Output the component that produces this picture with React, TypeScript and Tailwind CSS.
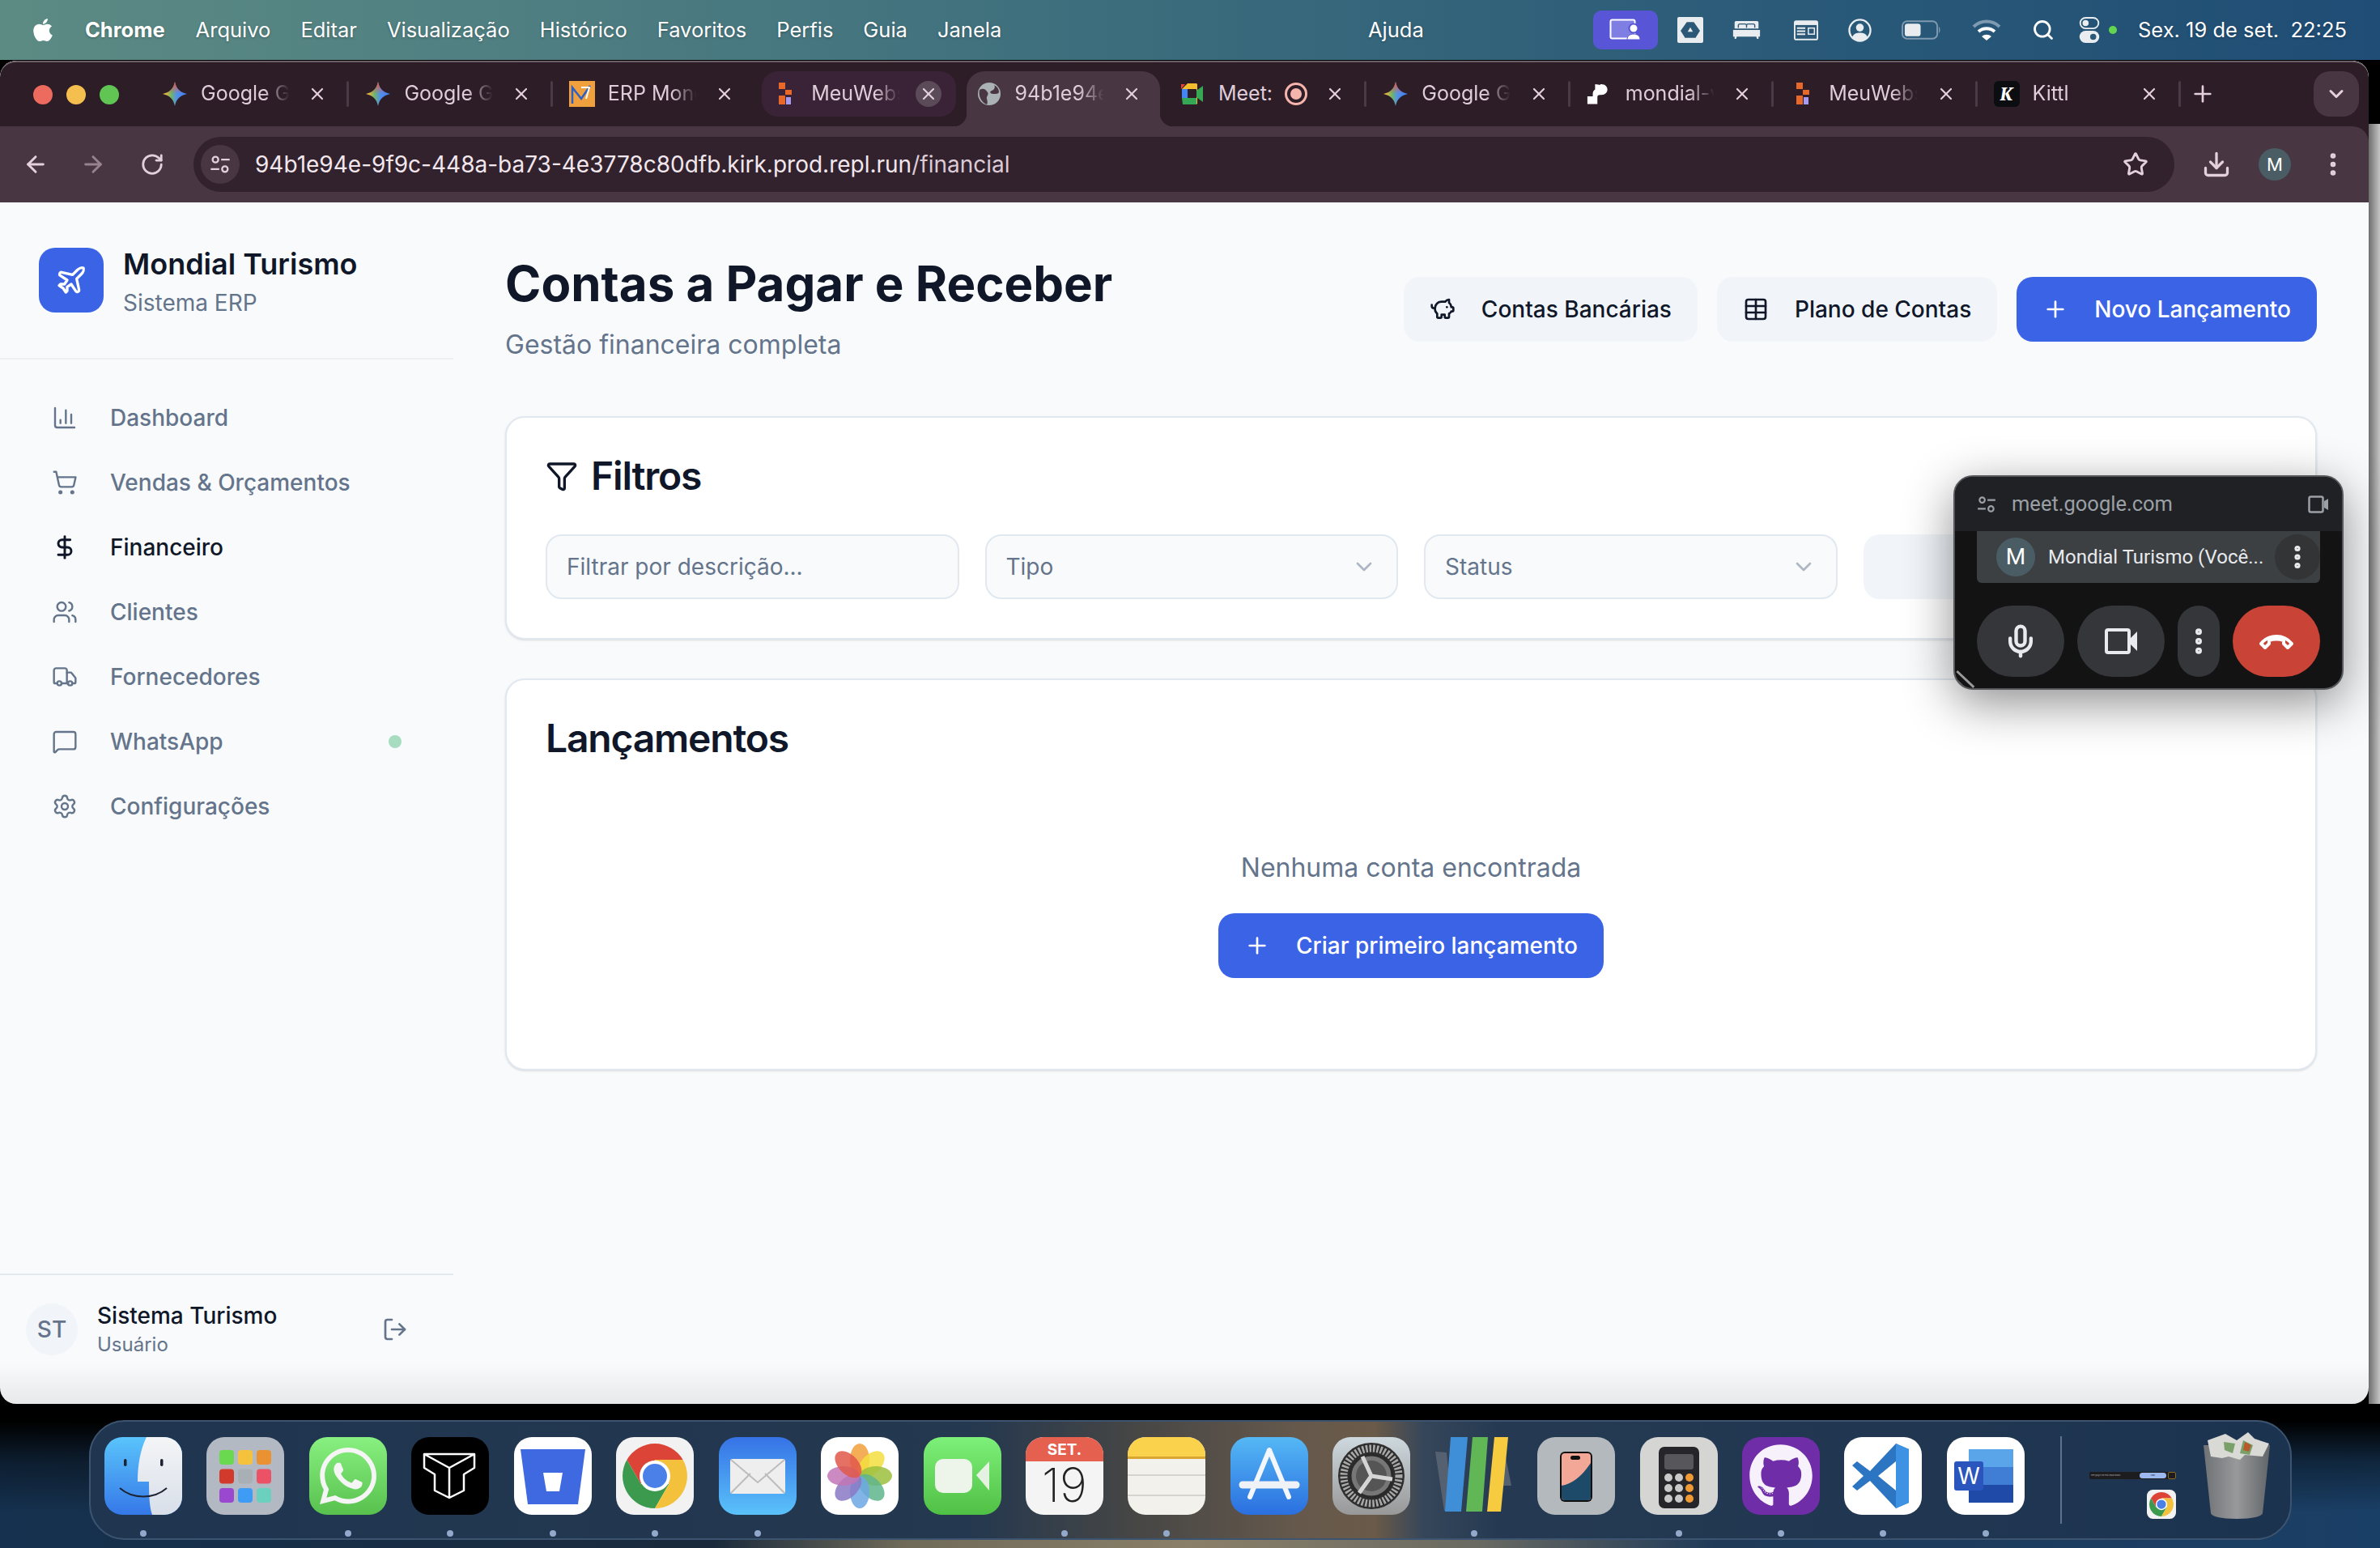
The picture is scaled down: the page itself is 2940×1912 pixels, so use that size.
import {
  ArrowLeft,
  ArrowRight,
  ChartColumn,
  ChevronDown,
  Download,
  DollarSign,
  EllipsisVertical,
  Filter,
  LogOut,
  MessageSquare,
  Mic,
  PiggyBank,
  Plane,
  Plus,
  RotateCw,
  Search,
  Settings,
  ShoppingCart,
  Star,
  Table,
  Truck,
  Users,
  X,
} from 'lucide-react';
import { FaApple, FaGithub, FaWhatsapp } from 'react-icons/fa';
import type { ReactNode } from 'react';

const menus = ['Arquivo', 'Editar', 'Visualização', 'Histórico', 'Favoritos', 'Perfis', 'Guia', 'Janela'];

function Tune({ className }: { className?: string }) {
  return (
    <svg viewBox="0 0 24 24" fill="none" stroke="currentColor" strokeWidth="2" className={className}>
      <circle cx="7" cy="7" r="3" />
      <path d="M13 7h9M2 17h9" />
      <circle cx="17" cy="17" r="3" />
    </svg>
  );
}

function MenuBar() {
  return (
    <header className="flex h-[74px] shrink-0 items-center bg-[linear-gradient(90deg,#5c8b84_0%,#4d7d81_25%,#3a6b7c_50%,#2a5a78_75%,#1f4d75_100%)] pl-[39px] text-[25.5px] text-white [text-shadow:0_1px_3px_rgba(0,0,0,.3)]">
      <div className="flex w-[1651px] items-center">
        <FaApple className="h-[32px] w-[28px]" />
        <span className="ml-[38px] font-bold">Chrome</span>
        <div className="ml-[38px] flex gap-[37px]">
          {menus.map((m) => (
            <span key={m}>{m}</span>
          ))}
        </div>
      </div>
      <span className="w-[278px]">Ajuda</span>

      <div className="flex h-[48px] w-[80px] items-center justify-center rounded-[10px] bg-[#5856d6]">
        <svg viewBox="0 0 40 28" className="h-[28px] w-[40px]">
          <rect x="1.5" y="1.5" width="30" height="23" rx="2" fill="#7f7ee2" stroke="#fff" strokeWidth="2" />
          <circle cx="30" cy="12" r="5.5" fill="#fff" stroke="#5856d6" strokeWidth="2" />
          <path d="M22 26c0-5 4-7 8-7s8 2 8 7z" fill="#fff" stroke="#5856d6" strokeWidth="1" />
        </svg>
      </div>
      <div className="ml-[24px] flex h-[32px] w-[32px] items-center justify-center rounded-[2px] bg-[#e9edf0]">
        <svg viewBox="0 0 24 24" className="h-[26px] w-[26px]">
          <path d="M8 3h8l7 10-5 8H6l-5-8z" fill="#2b5876" />
          <path d="M12 9l3 5H9z" fill="#e9edf0" />
        </svg>
      </div>
      <svg viewBox="0 0 36 26" fill="#e9edf0" className="ml-[36px] h-[24px] w-[35px]">
        <path d="M4 1h28a2 2 0 0 1 2 2v8H2V3a2 2 0 0 1 2-2zM0 13h36v9H34v3h-2l-1-3H5l-1 3H2v-3H0z" />
        <path d="M7 10V7a2 2 0 0 1 2-2h7a2 2 0 0 1 2 2v3M18 10V7a2 2 0 0 1 2-2h7a2 2 0 0 1 2 2v3" stroke="#2b5876" strokeWidth="1.5" fill="none" />
      </svg>
      <svg viewBox="0 0 32 26" className="ml-[41px] h-[25px] w-[30px]">
        <rect width="32" height="26" rx="3" fill="#e9edf0" />
        <rect x="2" y="6" width="28" height="18" fill="#2b5876" />
        <path d="M4 10h11M4 14h11M4 18h11" stroke="#e9edf0" strokeWidth="2" />
        <rect x="19" y="10" width="8" height="8" fill="none" stroke="#e9edf0" strokeWidth="1.6" />
      </svg>
      <svg viewBox="0 0 30 30" fill="none" className="ml-[37px] h-[29px] w-[29px]">
        <circle cx="15" cy="15" r="13.5" stroke="#e9edf0" strokeWidth="2.4" />
        <circle cx="15" cy="11.5" r="5" fill="#e9edf0" />
        <path d="M5 24c2-5 6-6 10-6s8 1 10 6c-3 3-6 5-10 5s-7-2-10-5z" fill="#e9edf0" />
      </svg>
      <svg viewBox="0 0 50 24" fill="none" className="ml-[37px] h-[24px] w-[49px]">
        <rect x="1" y="1" width="44" height="22" rx="6" stroke="#7f9ab0" strokeWidth="2" />
        <rect x="4" y="4" width="20" height="16" rx="3.5" fill="#e9edf0" />
        <path d="M47 8c2 1 2 7 0 8z" fill="#7f9ab0" />
      </svg>
      <svg viewBox="0 0 38 26" className="ml-[37px] h-[26px] w-[38px]">
        <path d="M3 9a23 23 0 0 1 32 0" fill="none" stroke="#7f9ab0" strokeWidth="4" />
        <path d="M9 15a15 15 0 0 1 20 0" fill="none" stroke="#fff" strokeWidth="4" />
        <path d="M19 26l-6-5a9 9 0 0 1 12 0z" fill="#fff" />
      </svg>
      <Search className="ml-[37px] h-[30px] w-[28px]" strokeWidth={2.4} />
      <svg viewBox="0 0 26 34" className="ml-[30px] h-[32px] w-[26px]">
        <rect x="1" y="1" width="24" height="14" rx="7" fill="none" stroke="#e9edf0" strokeWidth="2" />
        <circle cx="8" cy="8" r="4" fill="#e9edf0" />
        <rect y="18" width="26" height="16" rx="8" fill="#e9edf0" />
        <circle cx="18" cy="26" r="4" fill="#2b5876" />
      </svg>
      <span className="ml-[11px] h-[10px] w-[10px] rounded-full bg-[#63d64f]" />
      <span className="ml-[26px] whitespace-nowrap">Sex. 19 de set.&nbsp; 22:25</span>
    </header>
  );
}

function Gemini() {
  return (
    <svg viewBox="0 0 32 32" className="h-[32px] w-[32px]">
      <defs>
        <linearGradient id="gem" x1="0" y1="0" x2="1" y2="0">
          <stop offset="0.1" stopColor="#eeb93a" />
          <stop offset="0.35" stopColor="#6fb56a" />
          <stop offset="0.6" stopColor="#4f8fee" />
          <stop offset="1" stopColor="#3f7ff0" />
        </linearGradient>
        <linearGradient id="gemTop" x1="0" y1="0" x2="0" y2="1">
          <stop offset="0.05" stopColor="#e0584e" />
          <stop offset="0.5" stopColor="#e0584e" stopOpacity="0" />
        </linearGradient>
      </defs>
      <path d="M16 1c1.500 8 6 13 15 15-9 2-13.500 7-15 15-1.500-8-6-13-15-15 9-2 13.500-7 15-15z" fill="url(#gem)" />
      <path d="M16 1c1.500 8 6 13 15 15-9 2-13.500 7-15 15-1.500-8-6-13-15-15 9-2 13.500-7 15-15z" fill="url(#gemTop)" />
    </svg>
  );
}

function Figma() {
  return (
    <svg viewBox="0 0 32 32" className="h-[32px] w-[32px]">
      <rect x="8" y="2" width="8" height="8" fill="#e8682a" />
      <rect x="16" y="11" width="8" height="6" fill="#e8682a" />
      <rect x="8" y="18" width="8" height="11" fill="#e8682a" />
      <rect x="17" y="20" width="6" height="9" fill="#a79bf0" />
    </svg>
  );
}

type TabProps = {
  icon: ReactNode;
  title: string;
  variant?: 'hover' | 'active';
  separator?: boolean;
  meet?: boolean;
};

function Tab({ icon, title, variant, separator, meet }: TabProps) {
  return (
    <div className="relative flex h-[56px] w-[251.4px] shrink-0 items-center pl-[20px] text-[25px] text-[#dfcdd9]">
      {variant === 'hover' && <div className="absolute inset-y-0 left-[7px] right-[5px] rounded-[20px] bg-[#3b2337]" />}
      {variant === 'active' && (
        <>
          <div className="absolute -bottom-[12px] left-[8px] right-[4px] top-0 rounded-t-[22px] bg-[#483642]" />
          <div className="absolute -bottom-[12px] left-[-8px] h-[16px] w-[16px] bg-[radial-gradient(circle_at_0_0,transparent_16px,#483642_16.5px)]" />
          <div className="absolute -bottom-[12px] right-[-12px] h-[16px] w-[16px] bg-[radial-gradient(circle_at_100%_0,transparent_16px,#483642_16.5px)]" />
        </>
      )}
      <div className="relative flex h-[32px] w-[32px] shrink-0 items-center justify-center">{icon}</div>
      {meet ? (
        <span className="relative ml-[16px] w-[64px] whitespace-nowrap">{title}</span>
      ) : (
        <span className="relative ml-[16px] w-[112px] whitespace-nowrap [mask-image:linear-gradient(90deg,#000_70%,transparent_98%)]">
          {title}
        </span>
      )}
      {meet && (
        <span className="relative ml-[18px] flex h-[28px] w-[28px] items-center justify-center rounded-full border-[3px] border-[#f5b5ac]">
          <span className="h-[14px] w-[14px] rounded-full bg-[#f5b5ac]" />
        </span>
      )}
      <div
        className={`absolute right-[23px] flex h-[32px] w-[32px] items-center justify-center rounded-full ${
          variant === 'hover' ? 'bg-[#5b4a58]' : ''
        }`}
      >
        <X className="h-[24px] w-[24px] text-[#e3d0dc]" strokeWidth={2.2} />
      </div>
      {separator && <div className="absolute right-0 top-[12px] h-[32px] w-[3px] rounded bg-[#4a3a45]" />}
    </div>
  );
}

function ChromeBar() {
  return (
    <div className="shrink-0 overflow-hidden rounded-t-[20px] border-t-2 border-[#6a5d65] bg-[#2c1d27]">
      <div className="flex h-[79px] items-start pt-[11px]">
        <div className="flex w-[180px] items-center gap-[17px] pl-[41px] pt-[17px]">
          <span className="h-[24px] w-[24px] rounded-full bg-[#ec6a5e]" />
          <span className="h-[24px] w-[24px] rounded-full bg-[#f5bf4f]" />
          <span className="h-[24px] w-[24px] rounded-full bg-[#61c554]" />
        </div>
        <Tab icon={<Gemini />} title="Google Ge" separator />
        <Tab icon={<Gemini />} title="Google Ge" separator />
        <Tab
          icon={
            <div className="flex h-[32px] w-[32px] items-center justify-center bg-[#f0a03c]">
              <svg viewBox="0 0 32 32" className="h-[32px] w-[32px]" fill="none">
                <path d="M4 28V8l11 14L26 6" stroke="#2d5fc4" strokeWidth="2.500" />
                <path d="M15 8h10l-4 14" stroke="#fff" strokeWidth="2" />
              </svg>
            </div>
          }
          title="ERP Mond"
        />
        <Tab icon={<Figma />} title="MeuWebs" variant="hover" />
        <Tab
          icon={
            <svg viewBox="0 0 32 32" className="h-[32px] w-[32px]">
              <circle cx="16" cy="16" r="14" fill="#aab2b5" />
              <path d="M4 11c5-3 8 0 10 3s-2 5-1 8 1 6 0 7C7 27 2 19 4 11zM22 5c2 3 0 6-3 7s-2 4 2 4 6 0 7-2c0-4-2-7-6-9z" fill="#483642" />
            </svg>
          }
          title="94b1e94e"
          variant="active"
        />
        <Tab
          icon={
            <svg viewBox="0 0 32 32" className="h-[32px] w-[32px]">
              <path d="M3 10l7-7h11v7z" fill="#f3bd2e" />
              <path d="M3 10v11h7V10z" fill="#4285f4" />
              <path d="M3 21l1 8h17v-8z" fill="#34a853" />
              <path d="M21 3v26l1-1V4z" fill="#f3bd2e" />
              <path d="M21 12l8-6v20l-8-6z" fill="#34a853" />
              <path d="M10 10h11v11H10z" fill="#2c1d27" />
              <path d="M2 10V4l5 0z" fill="#ea4335" />
            </svg>
          }
          title="Meet:"
          meet
          separator
        />
        <Tab icon={<Gemini />} title="Google Ge" separator />
        <Tab
          icon={
            <svg viewBox="0 0 32 32" className="h-[32px] w-[32px]" fill="#fff">
              <path d="M2 18h7v-3c0-3 1-5 3-6V2h0c5 0 7 2 7 0 0 0 0 0 0 0h1c5 0 8 3 8 7s-3 7-8 7h-2c-2 0-3 1-3 3v9H2z" transform="translate(-1 2) scale(0.95)" />
            </svg>
          }
          title="mondial-v"
          separator
        />
        <Tab icon={<Figma />} title="MeuWebs" separator />
        <Tab
          icon={
            <div className="flex h-[32px] w-[32px] items-center justify-center rounded-[6px] bg-[#0b0d10] font-serif text-[24px] font-bold italic text-white">
              K
            </div>
          }
          title="Kittl"
          separator
        />
        <Plus className="ml-[11px] mt-[12px] h-[32px] w-[32px] text-[#e3d0dc]" strokeWidth={2} />
        <div className="ml-[121px] flex h-[56px] w-[56px] items-center justify-center rounded-[20px] bg-[#483642]">
          <ChevronDown className="h-[28px] w-[28px] text-[#e3d0dc]" strokeWidth={2.6} />
        </div>
      </div>
      <div className="flex h-[94px] items-center rounded-tr-[20px] bg-[#483642] text-[#e3d0dc]">
        <ArrowLeft className="ml-[28px] h-[32px] w-[32px] shrink-0" strokeWidth={2.2} />
        <ArrowRight className="ml-[39px] h-[32px] w-[32px] shrink-0 opacity-50" strokeWidth={2.2} />
        <RotateCw className="ml-[42px] h-[30px] w-[30px] shrink-0" strokeWidth={2.2} />
        <div className="ml-[36px] flex h-[68px] w-[2447px] shrink-0 items-center rounded-full bg-[#31222d] pl-[9px] pr-[32px]">
          <div className="flex h-[48px] w-[48px] items-center justify-center rounded-full bg-[#483642]">
            <Tune className="h-[28px] w-[28px]" />
          </div>
          <span className="ml-[19px] text-[28px] text-[#f3e7ee]">
            94b1e94e-9f9c-448a-ba73-4e3778c80dfb.kirk.prod.repl.run<span className="text-[#dccbd6]">/financial</span>
          </span>
          <Star className="ml-auto h-[32px] w-[32px]" strokeWidth={2.2} />
        </div>
        <Download className="ml-[34px] h-[36px] w-[36px] shrink-0" strokeWidth={2.2} />
        <div className="ml-[34px] flex h-[40px] w-[40px] shrink-0 items-center justify-center rounded-full bg-[#4a5d64] text-[22px] text-white">M</div>
        <EllipsisVertical className="ml-[34px] h-[36px] w-[36px] shrink-0" strokeWidth={2.4} />
      </div>
    </div>
  );
}

const navItems = [
  { label: 'Dashboard', icon: ChartColumn },
  { label: 'Vendas & Orçamentos', icon: ShoppingCart },
  { label: 'Financeiro', icon: DollarSign, active: true },
  { label: 'Clientes', icon: Users },
  { label: 'Fornecedores', icon: Truck },
  { label: 'WhatsApp', icon: MessageSquare, dot: true },
  { label: 'Configurações', icon: Settings },
];

function Sidebar() {
  return (
    <aside className="flex w-[560px] shrink-0 flex-col">
      <div className="border-b-2 border-[#eceff3] px-[48px] py-[56px]">
        <div className="flex h-[80px] items-start gap-[24px]">
          <div className="flex h-[80px] w-[80px] items-center justify-center rounded-[20px] bg-[#3b63e6]">
            <Plane className="h-[40px] w-[40px] text-white" />
          </div>
          <div className="-mt-[2px]">
            <div className="text-[36px] font-semibold leading-[44px] text-[#0f1729]">Mondial Turismo</div>
            <div className="text-[28px] leading-[52px] text-[#64748b]">Sistema ERP</div>
          </div>
        </div>
      </div>
      <nav className="pt-[32px]">
        {navItems.map((item) => (
          <div
            key={item.label}
            className={`flex h-[80px] items-center gap-[40px] pl-[64px] pr-[64px] text-[28px] font-medium ${
              item.active ? 'text-[#0f1729]' : 'text-[#64748b]'
            }`}
          >
            <item.icon className="h-[32px] w-[32px]" strokeWidth={item.active ? 2.2 : 1.8} />
            <span>{item.label}</span>
            {item.dot && <span className="ml-auto h-[16px] w-[16px] rounded-full bg-[#a7dcc0]" />}
          </div>
        ))}
      </nav>
      <div className="mt-auto flex h-[161px] items-start border-t-2 border-[#e2e8f0] pl-[32px] pr-[56px] pt-[35px]">
        <div className="flex h-[64px] w-[64px] items-center justify-center rounded-full bg-[#f1f5f9] text-[28px] font-medium text-[#64748b]">ST</div>
        <div className="-mt-[5px] ml-[24px]">
          <div className="text-[28px] font-medium leading-[40px] text-[#0f1729]">Sistema Turismo</div>
          <div className="text-[24px] leading-[32px] text-[#64748b]">Usuário</div>
        </div>
        <LogOut className="ml-auto mt-[16px] h-[32px] w-[32px] text-[#64748b]" strokeWidth={2} />
      </div>
    </aside>
  );
}

function PrimaryButton({ label }: { label: string }) {
  return (
    <button className="flex h-[80px] items-center rounded-[20px] bg-[#3b63e6] pl-[32px] pr-[32px] text-[28px] font-medium text-white">
      <Plus className="mr-[32px] h-[32px] w-[32px]" strokeWidth={2} />
      {label}
    </button>
  );
}

function SecondaryButton({ label, icon }: { label: string; icon: ReactNode }) {
  return (
    <button className="flex h-[80px] items-center rounded-[20px] bg-[#f1f5f9] px-[32px] text-[28px] font-medium text-[#0f1729]">
      <span className="mr-[32px]">{icon}</span>
      {label}
    </button>
  );
}

function SelectBox({ label }: { label: string }) {
  return (
    <div className="flex h-[80px] items-center justify-between rounded-[20px] border-2 border-[#e2e8f0] bg-[#f8fafc] pl-[24px] pr-[24px] text-[28px] text-[#64748b]">
      {label}
      <ChevronDown className="h-[32px] w-[32px] opacity-50" strokeWidth={2} />
    </div>
  );
}

function MainContent() {
  return (
    <main className="flex-1 pl-[64px] pr-[64px] pt-[64px]">
      <div className="flex items-center justify-between">
        <div>
          <h1 className="text-[60px] font-bold leading-[72px] text-[#0f1729]">Contas a Pagar e Receber</h1>
          <p className="mt-[16px] text-[32px] leading-[48px] text-[#64748b]">Gestão financeira completa</p>
        </div>
        <div className="flex gap-[24px]">
          <SecondaryButton label="Contas Bancárias" icon={<PiggyBank className="h-[32px] w-[32px]" strokeWidth={2} />} />
          <SecondaryButton label="Plano de Contas" icon={<Table className="h-[32px] w-[32px]" strokeWidth={2} />} />
          <PrimaryButton label="Novo Lançamento" />
        </div>
      </div>

      <section className="mt-[64px] rounded-[24px] border-2 border-[#e2e8f0] bg-white p-[48px] shadow-sm">
        <h2 className="flex items-center gap-[16px] text-[48px] font-semibold leading-[48px] tracking-tight text-[#0f1729]">
          <Filter className="h-[40px] w-[40px]" strokeWidth={2} />
          Filtros
        </h2>
        <div className="mt-[48px] grid grid-cols-4 gap-[32px]">
          <input
            placeholder="Filtrar por descrição..."
            className="h-[80px] w-full rounded-[20px] border-2 border-[#e2e8f0] bg-[#f8fafc] px-[24px] text-[28px] placeholder:text-[#64748b]"
          />
          <SelectBox label="Tipo" />
          <SelectBox label="Status" />
          <div className="h-[80px] rounded-[20px] bg-[#f1f5f9]" />
        </div>
      </section>

      <section className="mt-[48px] h-[484px] rounded-[24px] border-2 border-[#e2e8f0] bg-white p-[48px] shadow-sm">
        <h2 className="text-[48px] font-semibold leading-[48px] tracking-tight text-[#0f1729]">Lançamentos</h2>
        <div className="mt-[112px] flex flex-col items-center">
          <p className="text-[32px] leading-[48px] text-[#64748b]">Nenhuma conta encontrada</p>
          <div className="mt-[32px]">
            <PrimaryButton label="Criar primeiro lançamento" />
          </div>
        </div>
      </section>
    </main>
  );
}

function PipWindow() {
  return (
    <div className="absolute left-[2413px] top-[587px] h-[265px] w-[482px] overflow-hidden rounded-[24px] border-2 border-[#56585c] bg-[#131314] shadow-[0_16px_60px_rgba(0,0,0,.45)] [font-family:Roboto,sans-serif]">
      <div className="flex h-[67px] items-center bg-[#202124] pl-[26px] pr-[16px] text-[#9aa0a6]">
        <Tune className="h-[26px] w-[26px]" />
        <span className="ml-[18px] text-[25.5px]">meet.google.com</span>
        <svg viewBox="0 0 26 24" fill="none" className="ml-auto h-[24px] w-[26px]">
          <rect x="1.500" y="2.500" width="17" height="19" rx="2" stroke="currentColor" strokeWidth="2.500" />
          <path d="M20 8l5-3v14l-5-3z" fill="currentColor" />
        </svg>
      </div>
      <div className="ml-[27px] flex h-[64px] w-[424px] items-center rounded-b-[6px] bg-[#3c4043] pl-[24px] text-[24px] text-[#e8eaed]">
        <div className="flex h-[48px] w-[48px] items-center justify-center rounded-full bg-[#4a5d64] text-[28px] text-white">M</div>
        <span className="ml-[16px] w-[270px] whitespace-nowrap">Mondial Turismo (Você...</span>
        <div className="ml-auto flex h-[56px] w-[56px] items-center justify-center rounded-full bg-[#323436]">
          <EllipsisVertical className="h-[36px] w-[36px] text-[#e8eaed]" strokeWidth={2.8} />
        </div>
      </div>
      <div className="ml-[27px] mt-[28px] flex gap-[16px]">
        <div className="flex h-[88px] w-[108px] items-center justify-center rounded-full bg-[#35363a]">
          <Mic className="h-[44px] w-[44px] text-[#e8eaed]" strokeWidth={2.4} />
        </div>
        <div className="flex h-[88px] w-[108px] items-center justify-center rounded-full bg-[#35363a]">
          <svg viewBox="0 0 40 32" fill="none" className="h-[32px] w-[40px]">
            <rect x="2" y="2" width="28" height="28" rx="2" stroke="#e8eaed" strokeWidth="4" />
            <path d="M32 12l8-8v24l-8-8z" fill="#e8eaed" />
          </svg>
        </div>
        <div className="flex h-[88px] w-[52px] items-center justify-center rounded-full bg-[#35363a]">
          <EllipsisVertical className="h-[40px] w-[40px] text-[#e8eaed]" strokeWidth={2.8} />
        </div>
        <div className="flex h-[88px] w-[108px] items-center justify-center rounded-full bg-[#c94337]">
          <svg viewBox="0 0 44 20" className="h-[20px] w-[44px]" fill="none" stroke="#fff" strokeWidth="4">
            <path d="M3 13c10-12 28-12 38 0l-5 5-5-5V9c-6-2-12-2-18 0v4l-5 5z" strokeLinejoin="round" />
          </svg>
        </div>
      </div>
      <svg viewBox="0 0 24 24" className="absolute bottom-0 left-0 h-[28px] w-[28px]" stroke="#9a9a9a" strokeWidth="2.5">
        <path d="M2 6l18 17M2 16l7 7" />
      </svg>
    </div>
  );
}

/* dock icons, all on a 96 box */
function Tile({ bg, children }: { bg: string; children: ReactNode }) {
  return (
    <svg viewBox="0 0 96 96" className="h-[96px] w-[96px]">
      <rect width="96" height="96" rx="22" fill={bg} />
      {children}
    </svg>
  );
}

function ChromeLogo() {
  return (
    <>
      <path d="M82.600 28A40 40 0 0 0 13.400 28L30.700 58 48 28z" fill="#db4437" />
      <path d="M13.400 28A40 40 0 0 0 48 88L65.300 58H30.700z" fill="#3c9a4e" />
      <path d="M48 88A40 40 0 0 0 82.600 28H48l17.300 30z" fill="#f4c13d" />
      <circle cx="48" cy="48" r="19" fill="#fff" />
      <circle cx="48" cy="48" r="15" fill="#4a80e8" />
    </>
  );
}

const dockIcons: { node: ReactNode; running?: boolean }[] = [
  {
    running: true,
    node: (
      <svg viewBox="0 0 96 96" className="h-[96px] w-[96px]">
        <defs>
          <linearGradient id="fb" x1="0" y1="0" x2="0" y2="1">
            <stop offset="0" stopColor="#5ac4fb" />
            <stop offset="1" stopColor="#3578e8" />
          </linearGradient>
          <linearGradient id="fw" x1="0" y1="0" x2="0" y2="1">
            <stop offset="0" stopColor="#f4f5f7" />
            <stop offset="1" stopColor="#d8dfe9" />
          </linearGradient>
        </defs>
        <rect width="96" height="96" rx="22" fill="url(#fb)" />
        <path d="M52 0h22a22 22 0 0 1 22 22v52a22 22 0 0 1-22 22H59c-3-9-4-20-4-41H41c0-22 4-41 11-55z" fill="url(#fw)" />
        <path d="M19 63c16 14 42 14 58 0" fill="none" stroke="#1d2330" strokeWidth="2" />
        <rect x="24" y="27" width="3.500" height="9" rx="1.700" fill="#1d2330" />
        <rect x="69" y="27" width="3.500" height="9" rx="1.700" fill="#1d2330" />
      </svg>
    ),
  },
  {
    node: (
      <Tile bg="#b3b9c2">
        {[
          ['#6ad94f', '#f5c23e', '#ea9232'],
          ['#d23a2b', '#a9b0b5', '#eb5266'],
          ['#9a48d0', '#3f9cf5', '#6bd0bd'],
        ].map((row, y) =>
          row.map((c, x) => <rect key={`${x}${y}`} x={16 + x * 23} y={16 + y * 23.5} width="18" height="18" rx="4" fill={c} />),
        )}
      </Tile>
    ),
  },
  {
    running: true,
    node: (
      <div className="flex h-[96px] w-[96px] items-center justify-center rounded-[22px] bg-[linear-gradient(180deg,#88f080,#58c14e)]">
        <FaWhatsapp className="h-[80px] w-[80px] text-[#f5f5f5]" />
      </div>
    ),
  },
  {
    running: true,
    node: (
      <Tile bg="#000">
        <path d="M16 21H78V38L65 46V66L47 75 29 66V46L16 38zM16 21L47 38 78 21M47 38V75" fill="none" stroke="#fff" strokeWidth="2.500" strokeLinejoin="round" />
      </Tile>
    ),
  },
  {
    running: true,
    node: (
      <Tile bg="#fff">
        <path d="M8 15h80l-9 68H17z" fill="#3f69e0" />
        <path d="M36 44h24l-4 23H40z" fill="#fff" />
      </Tile>
    ),
  },
  {
    running: true,
    node: (
      <Tile bg="#f2f2f2">
        <ChromeLogo />
      </Tile>
    ),
  },
  {
    running: true,
    node: (
      <svg viewBox="0 0 96 96" className="h-[96px] w-[96px]">
        <defs>
          <linearGradient id="mail" x1="0" y1="0" x2="0" y2="1">
            <stop offset="0" stopColor="#3672e6" />
            <stop offset="1" stopColor="#5ac2fa" />
          </linearGradient>
        </defs>
        <rect width="96" height="96" rx="22" fill="url(#mail)" />
        <rect x="14" y="27" width="68" height="43" rx="3" fill="#eee" />
        <path d="M15 28l33 28 33-28M15 69l24-24M81 69L57 45" fill="none" stroke="#bbb" strokeWidth="1.800" />
      </svg>
    ),
  },
  {
    node: (
      <Tile bg="#fff">
        {[
          ['#f2a03a', 0],
          ['#f3de3e', 45],
          ['#9cbf3e', 90],
          ['#5fb58c', 135],
          ['#6da7e3', 180],
          ['#8a79c4', 225],
          ['#c275b6', 270],
          ['#e0584a', 315],
        ].map(([c, a]) => (
          <ellipse key={String(a)} cx="48" cy="28" rx="12" ry="20" fill={String(c)} opacity="0.85" transform={`rotate(${a} 48 48)`} />
        ))}
      </Tile>
    ),
  },
  {
    node: (
      <div className="flex h-[96px] w-[96px] items-center justify-center rounded-[22px] bg-[linear-gradient(180deg,#7df07a,#50c044)]">
        <svg viewBox="0 0 96 96" className="h-[96px] w-[96px]">
          <rect x="14" y="27" width="46" height="42" rx="10" fill="#edf5ea" />
          <path d="M65 47l16-17v36z" fill="#e5f2e2" strokeLinejoin="round" />
        </svg>
      </div>
    ),
  },
  {
    running: true,
    node: (
      <svg viewBox="0 0 96 96" className="h-[96px] w-[96px] overflow-hidden rounded-[22px]">
        <rect width="96" height="96" fill="#f4f4f4" />
        <rect width="96" height="30" fill="#e5604f" />
        <text x="48" y="22" textAnchor="middle" fontSize="19" fontWeight="700" fill="#fff" fontFamily="Inter, sans-serif">SET.</text>
        <text x="48" y="80" textAnchor="middle" fontSize="58" fontWeight="200" fill="#222" fontFamily="Inter, sans-serif">19</text>
      </svg>
    ),
  },
  {
    running: true,
    node: (
      <svg viewBox="0 0 96 96" className="h-[96px] w-[96px] overflow-hidden rounded-[22px]">
        <rect width="96" height="96" fill="#f2f1ec" />
        <rect width="96" height="24" fill="#fbd24b" />
        <rect y="24" width="96" height="3" fill="#d9a731" />
        <path d="M0 47h96M0 72h96" stroke="#d5d4cf" strokeWidth="2" />
      </svg>
    ),
  },
  {
    node: (
      <svg viewBox="0 0 96 96" className="h-[96px] w-[96px]">
        <defs>
          <linearGradient id="as" x1="0" y1="0" x2="0" y2="1">
            <stop offset="0" stopColor="#55b8f5" />
            <stop offset="1" stopColor="#2a6fe0" />
          </linearGradient>
        </defs>
        <rect width="96" height="96" rx="22" fill="url(#as)" />
        <path d="M48 16l24 58M48 16L24 74" fill="none" stroke="#f3f6fa" strokeWidth="6" strokeLinecap="round" />
        <path d="M15 59h66" stroke="#eef1f5" strokeWidth="9" strokeLinecap="round" />
      </svg>
    ),
  },
  {
    node: (
      <svg viewBox="0 0 96 96" className="h-[96px] w-[96px]">
        <defs>
          <linearGradient id="sys" x1="0" y1="0" x2="0" y2="1">
            <stop offset="0" stopColor="#cdd8de" />
            <stop offset="1" stopColor="#989898" />
          </linearGradient>
        </defs>
        <rect width="96" height="96" rx="22" fill="url(#sys)" />
        <circle cx="48" cy="48" r="41" fill="#2e2e2e" />
        <circle cx="48" cy="48" r="34" fill="none" stroke="#a9a9a9" strokeWidth="9" strokeDasharray="2.500 2" />
        <circle cx="48" cy="48" r="26" fill="#777" stroke="#2a2a2a" strokeWidth="3" />
        <circle cx="48" cy="48" r="19" fill="#555" />
        <path d="M48 48L37 24M48 48L74 52M48 48L33 69" stroke="#d5d5d5" strokeWidth="5" />
      </svg>
    ),
  },
  {
    running: true,
    node: (
      <svg viewBox="0 0 96 96" className="h-[96px] w-[96px]">
        <path d="M0 18l14 1 7 72-10 0zM84 10l10 50-12 0z" fill="#556170" />
        <path d="M19 0h21l-8 92H12z" fill="#3f8fd8" />
        <path d="M46 0h19l-7 92H38z" fill="#61b656" />
        <path d="M73 0h17l-9 92H64z" fill="#f7cb3f" />
      </svg>
    ),
  },
  {
    node: (
      <Tile bg="#b3b9bd">
        <rect x="28" y="18" width="40" height="62" rx="6" fill="#111" />
        <rect x="30" y="20" width="36" height="58" rx="4" fill="#f3a797" />
        <path d="M30 60c12-2 24-10 36-28v42a4 4 0 0 1-4 4H34a4 4 0 0 1-4-4z" fill="#1d4a69" />
        <rect x="41" y="23" width="12" height="5" rx="2.500" fill="#111" />
      </Tile>
    ),
  },
  {
    running: true,
    node: (
      <Tile bg="#d5d6d4">
        <rect x="23" y="12" width="50" height="76" rx="7" fill="#26262a" />
        <rect x="30" y="21" width="36" height="19" rx="3" fill="#57575b" />
        {[0, 1, 2].map((row) =>
          [0, 1, 2].map((col) => (
            <circle key={`${row}${col}`} cx={35 + col * 13} cy={50 + row * 13} r="5" fill={col === 2 ? '#f09a36' : '#c9c9c9'} />
          )),
        )}
      </Tile>
    ),
  },
  {
    running: true,
    node: (
      <div className="flex h-[96px] w-[96px] items-center justify-center rounded-[22px] bg-[#6f2da8]">
        <FaGithub className="h-[80px] w-[80px] text-[#f6f1fb]" />
      </div>
    ),
  },
  {
    running: true,
    node: (
      <Tile bg="#fff">
        <path d="M64 8L32 42 16 30l-6 5 14 13-14 13 6 5 16-12 32 34 16-7V15z" fill="#2c75c2" />
        <path d="M64 8l16 7v66l-16 7z" fill="#3d92e3" />
        <path d="M64 30L42 48l22 18z" fill="#fff" />
      </Tile>
    ),
  },
  {
    running: true,
    node: (
      <Tile bg="#fff">
        <rect x="27" y="15" width="55" height="22" fill="#5aa4e9" />
        <rect x="27" y="37" width="55" height="22" fill="#3f7ed4" />
        <rect x="27" y="59" width="55" height="22" fill="#1f4aa8" />
        <rect x="9" y="30" width="36" height="36" rx="3" fill="#2a55bd" />
        <text x="27" y="58" textAnchor="middle" fontSize="28" fill="#fff" fontFamily="Inter, sans-serif">W</text>
      </Tile>
    ),
  },
];

function Dock() {
  return (
    <div className="flex h-[178px] shrink-0 justify-start bg-[linear-gradient(180deg,#000_0%,#000_12%,rgba(0,0,0,.4)_40%,transparent_75%),linear-gradient(90deg,#15314f_0%,#1a2a3c_30%,#6f6a58_38%,#8a7f68_50%,#6a6a62_62%,#1f3a58_72%,#1a3f66_100%)] pl-[110px] pt-[20px]">
      <div className="flex h-[148px] w-[2721px] items-start rounded-[44px] border-2 border-[#3c5470] bg-[linear-gradient(90deg,#1f3550_0%,#24384f_40%,#444545_47%,#66594c_55%,#6a5a48_58.4%,#36465a_60.6%,#253a52_64%,#1c3350_100%)] pl-[17px] pt-[19px]">
        <div className="flex gap-[30.45px]">
          {dockIcons.map((icon, i) => (
            <div key={i} className="flex w-[96px] flex-col items-center">
              {icon.node}
              <span className={`mt-[19px] h-[8px] w-[8px] rounded-full ${icon.running ? 'bg-[#93a9cc]' : 'bg-transparent'}`} />
            </div>
          ))}
        </div>
        <div className="ml-[44px] mt-[-1px] h-[108px] w-[2px] bg-[#5d7290]" />
        <div className="ml-[34px] flex w-[107px] flex-col items-end pt-[43px]">
          <div className="flex h-[9px] w-[107px] items-center justify-between rounded-[2px] bg-[#1d1d1f] pl-[2px] text-[2px] text-[#aaa]">
            <span className="w-[58px] whitespace-nowrap">meet.google.com está compartilhando</span>
            <span className="h-[7px] w-[33px] rounded-full bg-[#9db8ee] text-center leading-[7px] text-[#123]">Parar</span>
            <span className="h-[9px] w-[10px] rounded-[2px] border border-[#8a6a20]" />
          </div>
          <svg viewBox="0 0 96 96" className="mt-[13px] h-[36px] w-[36px]">
            <rect width="96" height="96" rx="20" fill="#f2f2f2" />
            <ChromeLogo />
          </svg>
        </div>
        <svg viewBox="0 0 84 110" className="ml-[33px] mt-[-8px] h-[110px] w-[84px]">
          <defs>
            <linearGradient id="trash" x1="0" y1="0" x2="1" y2="0">
              <stop offset="0" stopColor="#6f7275" />
              <stop offset="0.5" stopColor="#97999b" />
              <stop offset="1" stopColor="#626568" />
            </linearGradient>
          </defs>
          <path d="M1 18h82l-9 84c-1 4-12 7-32 7s-31-3-32-7z" fill="url(#trash)" />
          <path d="M6 12l22-8 14 8 14-10 8 8 18 6-8 16-22-2-6 6-14-4-8 2-14-2z" fill="#d9d9d6" />
          <path d="M26 14l14 2-3 12-10-4zM50 12l12 6-4 12-12-2z" fill="#7aa06a" />
          <path d="M52 14l8 4-3 8-7-2z" fill="#b65a2a" />
        </svg>
      </div>
    </div>
  );
}

export default function App() {
  return (
    <div className="relative flex h-[1912px] w-[2940px] flex-col overflow-hidden bg-black [font-family:Inter,sans-serif]">
      <MenuBar />
      <div className="flex h-[1660px] shrink-0 bg-black pt-[1px]">
        <div className="relative flex w-[2926px] shrink-0 flex-col overflow-hidden rounded-[20px] bg-[#f8fafc]">
          <ChromeBar />
          <div className="flex min-h-0 flex-1">
            <Sidebar />
            <MainContent />
          </div>
          <div className="absolute inset-x-0 bottom-0 h-[50px] bg-[linear-gradient(180deg,transparent,rgba(0,0,0,.07))]" />
        </div>
        <div className="mt-[78px] w-[14px] bg-[linear-gradient(90deg,#6f6f6f,#c4c4c4)]" />
      </div>
      <Dock />
      <PipWindow />
    </div>
  );
}
